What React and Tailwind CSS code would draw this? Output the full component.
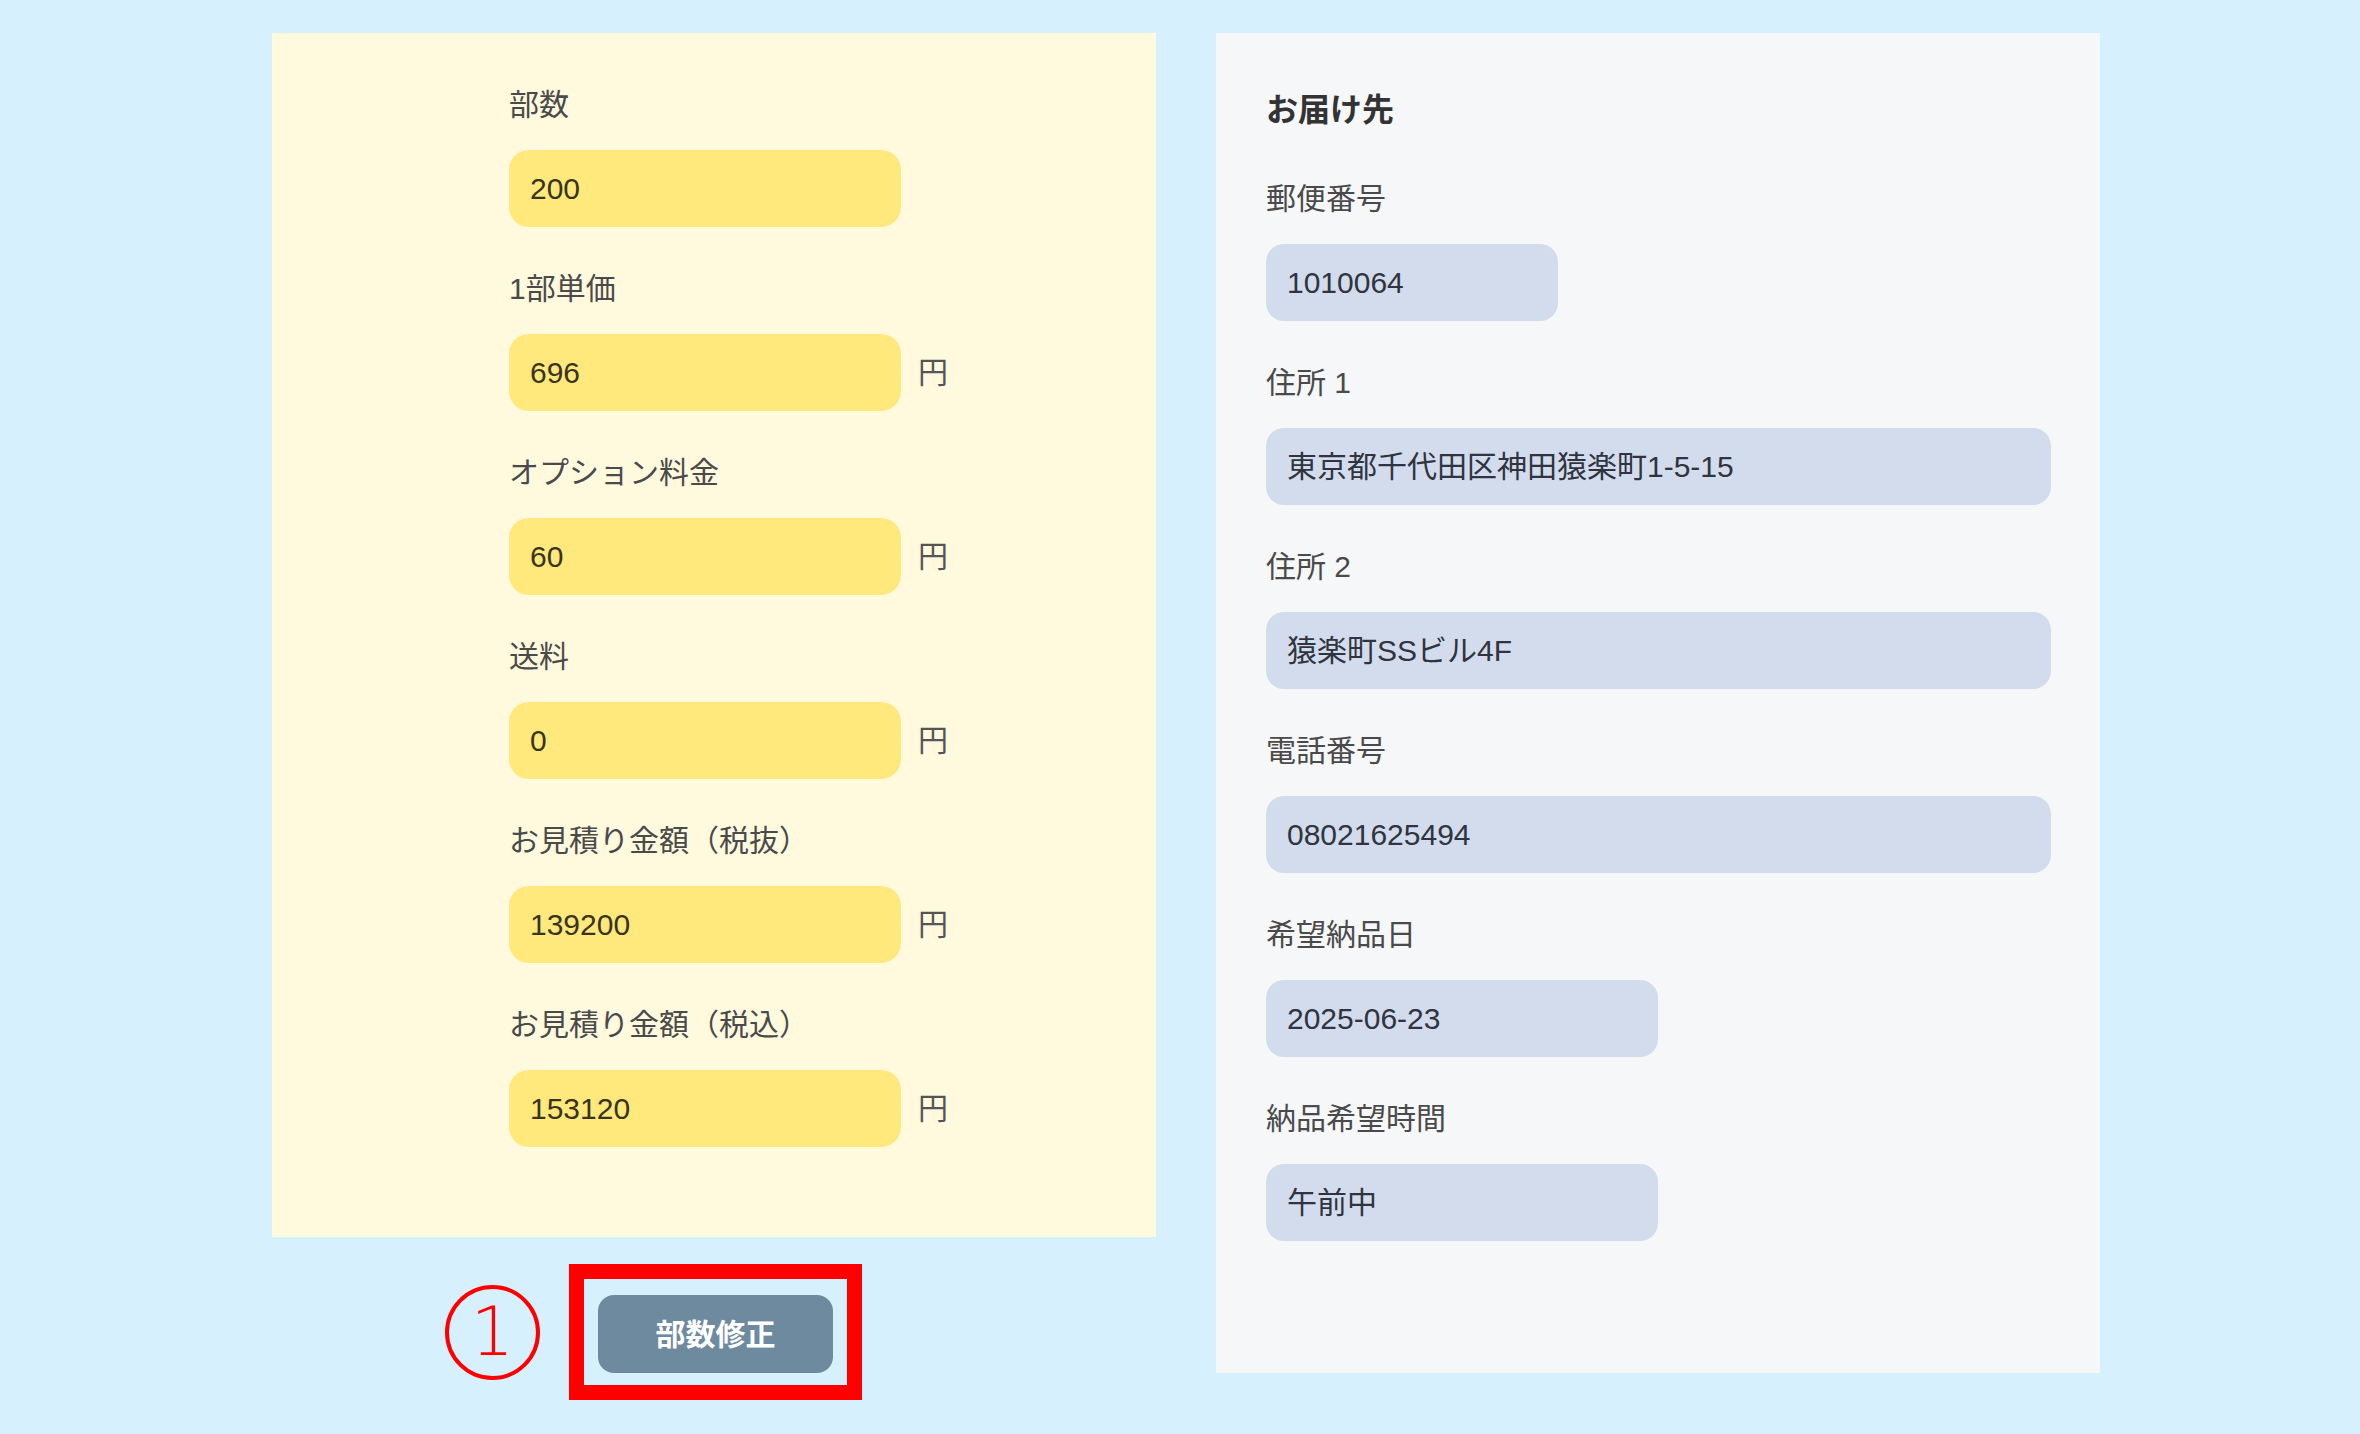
const font = { fontFamily: '"Liberation Sans", "Noto Sans CJK JP", sans-serif' };

const estimate = [
    { label: "部数", value: "200", unit: false },
    { label: "1部単価", value: "696", unit: true },
    { label: "オプション料金", value: "60", unit: true },
    { label: "送料", value: "0", unit: true },
    { label: "お見積り金額（税抜）", value: "139200", unit: true },
    { label: "お見積り金額（税込）", value: "153120", unit: true },
];

const address = [
    { label: "郵便番号", value: "1010064", width: "w-[292px]" },
    { label: "住所 1", value: "東京都千代田区神田猿楽町1-5-15", width: "w-[785px]" },
    { label: "住所 2", value: "猿楽町SSビル4F", width: "w-[785px]" },
    { label: "電話番号", value: "08021625494", width: "w-[785px]" },
    { label: "希望納品日", value: "2025-06-23", width: "w-[392px]" },
    { label: "納品希望時間", value: "午前中", width: "w-[392px]" },
];

function EstimateField({ label, value, unit }) {
    return (
        <div className="flex flex-col">
            <div className="h-[40px] leading-[40px] text-[30px] text-[#4a4a4a]">{label}</div>
            <div className="mt-[25px] flex items-center">
                <div className="w-[392px] h-[77px] rounded-[20px] bg-[#ffe97c] flex items-center pl-[21px] text-[30px] text-[#3a3320]">
                    {value}
                </div>
                {unit && <span className="ml-[17px] text-[30px] text-[#555]">円</span>}
            </div>
        </div>
    );
}

function AddressField({ label, value, width }) {
    return (
        <div className="flex flex-col">
            <div className="h-[40px] leading-[40px] text-[30px] text-[#4a4a4a]">{label}</div>
            <div
                className={`mt-[25px] ${width} h-[77px] rounded-[18px] bg-[#d3dcec] flex items-center pl-[21px] text-[30px] text-[#2f3440]`}
            >
                {value}
            </div>
        </div>
    );
}

export default function App() {
    return (
        <div className="min-h-[1434px] w-full bg-[#d6f1fd] pt-[33px] pl-[272px]" style={font}>
            <div className="flex items-start gap-[60px]">
                <div className="flex flex-col">
                    <div className="w-[884px] bg-[#fff9de] pl-[237px] pt-[52px] pb-[90px] flex flex-col gap-[42px]">
                        {estimate.map((f) => (
                            <EstimateField key={f.label} {...f} />
                        ))}
                    </div>
                    <div className="mt-[27px] flex items-center pl-[173px] gap-[29px]">
                        {/* annotation number */}
                        <div className="w-[95px] h-[95px] rounded-full border-[4px] border-[#ff0000] flex items-center justify-center text-[#ff0000]">
                            <span className="text-[68px] leading-none font-extralight font-['DejaVu_Sans',sans-serif]">1</span>
                        </div>
                        <div className="border-[15px] border-[#ff0000] pl-[14px] pr-[14px] pt-[16px] pb-[12px]">
                            <button className="w-[235px] h-[78px] rounded-[16px] bg-[#6e8a9e] text-white text-[30px] font-semibold">
                                部数修正
                            </button>
                        </div>
                    </div>
                </div>
                <div className="w-[884px] bg-[#f5f7f9] pl-[50px] pt-[55px] pb-[132px] flex flex-col">
                    <div className="h-[44px] leading-[44px] text-[32px] font-bold text-[#333]">お届け先</div>
                    <div className="mt-[47px] flex flex-col gap-[42px]">
                        {address.map((f) => (
                            <AddressField key={f.label} {...f} />
                        ))}
                    </div>
                </div>
            </div>
        </div>
    );
}
